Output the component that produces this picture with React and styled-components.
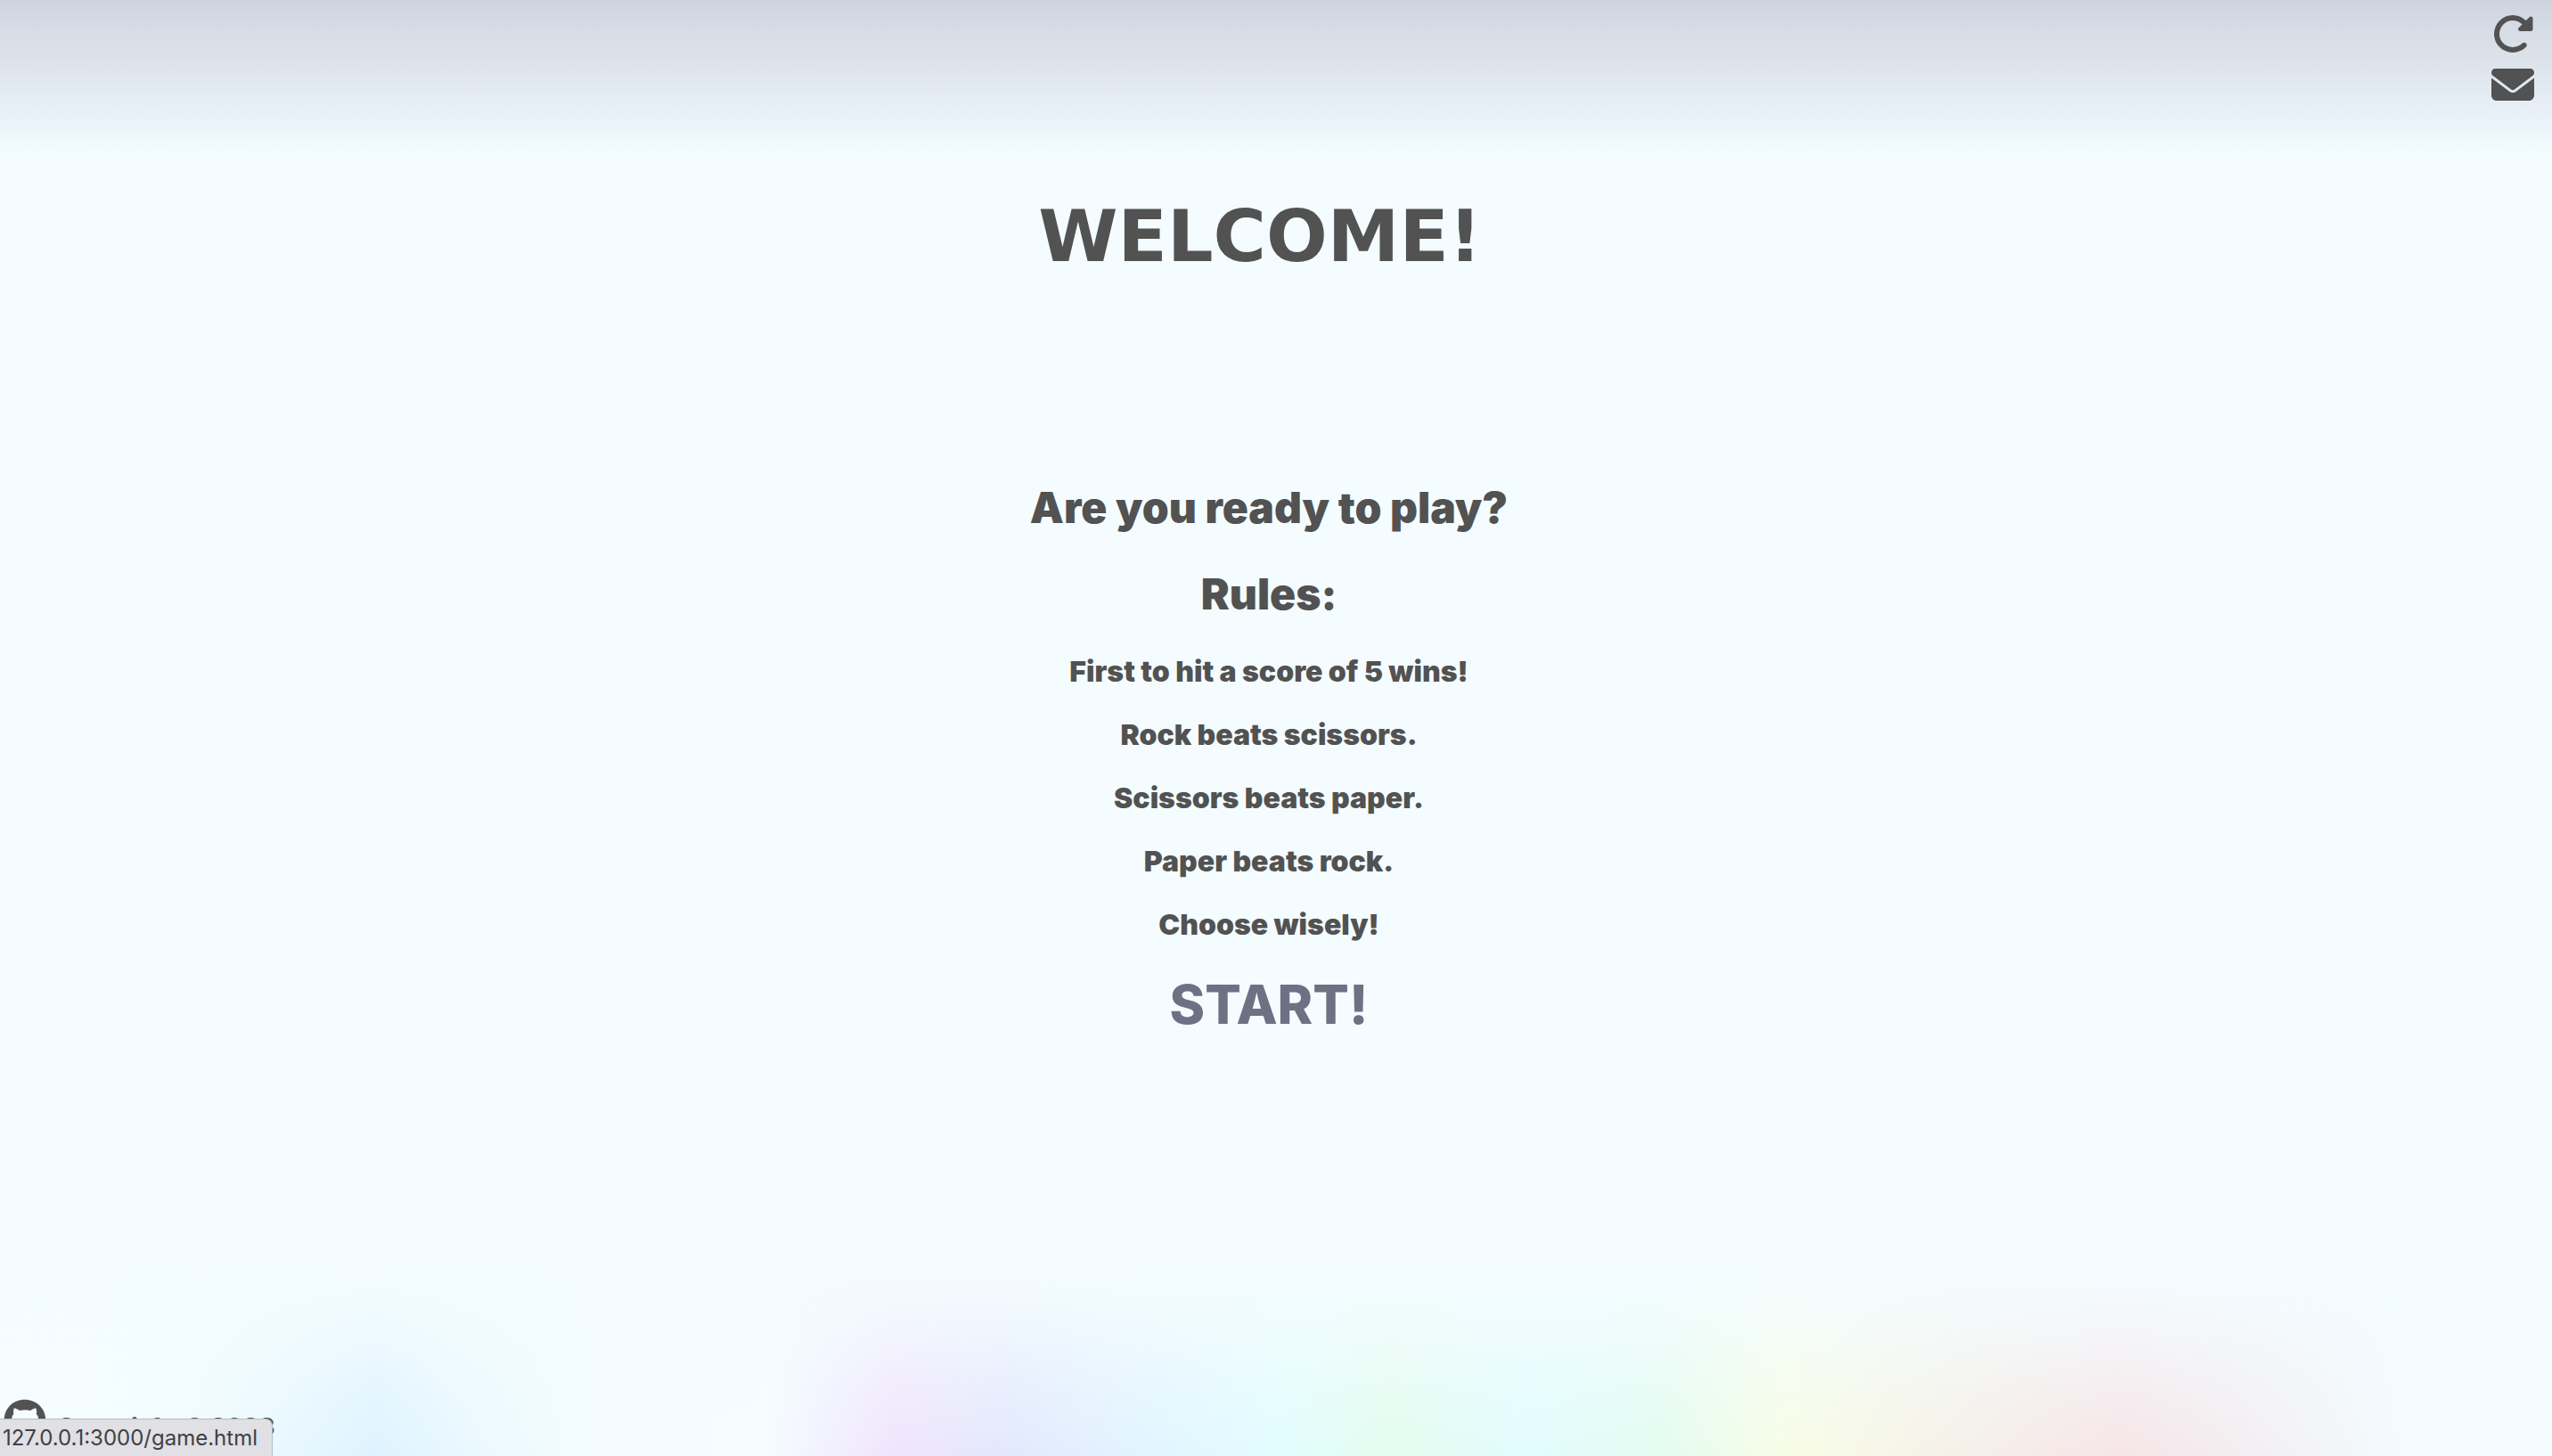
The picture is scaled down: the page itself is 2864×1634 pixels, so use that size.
import React from 'react';
import styled, { createGlobalStyle } from 'styled-components';
import { FaRotateRight, FaEnvelope, FaGithub } from 'react-icons/fa6';

const Global = createGlobalStyle`
  * { box-sizing: border-box; }
  body {
    margin: 0;
    background: #f4fcff;
    color: #525252;
    font-family: Inter, "Liberation Sans", sans-serif;
    font-weight: 900;
  }
`;

const Page = styled.div`
  display: flex;
  flex-direction: column;
  min-height: 100vh;
  background:
    linear-gradient(180deg, #cdd4de 0, #d5dce5 32px, #dae1e8 60px, #e2e9f1 96px, #ebf3fb 140px, #eff8fb 156px, rgba(244, 252, 255, 0) 174px),
    linear-gradient(0deg, rgba(244, 252, 255, 0) 0, rgba(244, 252, 255, 0.3) 70px, rgba(244, 252, 255, 0.7) 140px, #f4fcff 210px) bottom / 100% 234px no-repeat,
    linear-gradient(90deg,
      #f6fdff 0, #f3fcff 7%, #e9f8ff 11%, #def3ff 14.7%, #e9f8ff 18%, #f4fcff 23%, #f6fcff 30%,
      #f2f0ff 32.5%, #f1e4fc 35%, #e3e8fd 39.5%, #e2f3ff 44%, #e2fdff 50%, #e3fcee 54.5%,
      #e2fcff 60%, #e3fcf0 65%, #f8fde6 70%, #f5f0e9 77%, #f6e5e8 83%, #f3eef1 88%, #f3fbfe 94%, #f4fcff 100%)
      bottom / 100% 234px no-repeat,
    #f4fcff;
`;

const Header = styled.header`
  display: flex;
  flex-direction: column;
  align-items: flex-end;
  gap: 9px;
  padding: 14px 20px 0;
`;

const IconButton = styled.button`
  display: flex;
  padding: 0;
  border: 0;
  background: none;
  color: inherit;
  font-size: 48px;
`;

const IconLink = styled.a`
  display: flex;
  color: inherit;
  font-size: 48px;
`;

const Main = styled.main`
  display: flex;
  flex: 1;
  flex-direction: column;
  align-items: center;
  padding: 98px 16px 0 0;
  text-align: center;
`;

const Title = styled.h1`
  margin: 0 20px 227px 0;
  font: 700 81px/96px "DejaVu Sans", sans-serif;
`;

const Heading = styled.h2`
  margin: 0 0 37px;
  font-size: 48px;
  font-weight: 900;
  line-height: 60px;
`;

const Rule = styled.p`
  margin: 0 0 31px;
  font-size: 32px;
  line-height: 40px;
`;

const Start = styled.a`
  color: #6e7183;
  font-size: 60px;
  font-weight: 800;
  line-height: 76px;
  text-decoration: none;
`;

const Footer = styled.footer`
  display: flex;
  align-items: flex-end;
  gap: 12px;
  padding: 0 4px 16px;
  font-size: 27px;
  line-height: 32px;
`;

const StatusBar = styled.div`
  position: fixed;
  bottom: 0;
  left: 0;
  display: flex;
  justify-content: flex-end;
  width: 306px;
  height: 42px;
  padding-right: 16px;
  border: 1px solid #b9bcc1;
  border-width: 1px 1px 0 0;
  border-radius: 0 8px 0 0;
  background: #e0e0e5;
  color: #3f4043;
  font: 400 24px/42px Inter, sans-serif;
  white-space: nowrap;
`;

const rules = [
  'First to hit a score of 5 wins!',
  'Rock beats scissors.',
  'Scissors beats paper.',
  'Paper beats rock.',
  'Choose wisely!',
];

export default function App() {
  return (
    <Page>
      <Global />
      <Header>
        <IconButton type="button" aria-label="Restart"><FaRotateRight /></IconButton>
        <IconLink href="#contact" aria-label="Email"><FaEnvelope /></IconLink>
      </Header>
      <Main>
        <Title>WELCOME!</Title>
        <Heading>Are you ready to play?</Heading>
        <Heading>Rules:</Heading>
        {rules.map((rule) => <Rule key={rule}>{rule}</Rule>)}
        <Start href="#game">START!</Start>
      </Main>
      <Footer>
        <IconLink href="#github" aria-label="GitHub"><FaGithub /></IconLink>
        <span>Copyright © 2023</span>
      </Footer>
      <StatusBar role="status">127.0.0.1:3000/game.html</StatusBar>
    </Page>
  );
}
